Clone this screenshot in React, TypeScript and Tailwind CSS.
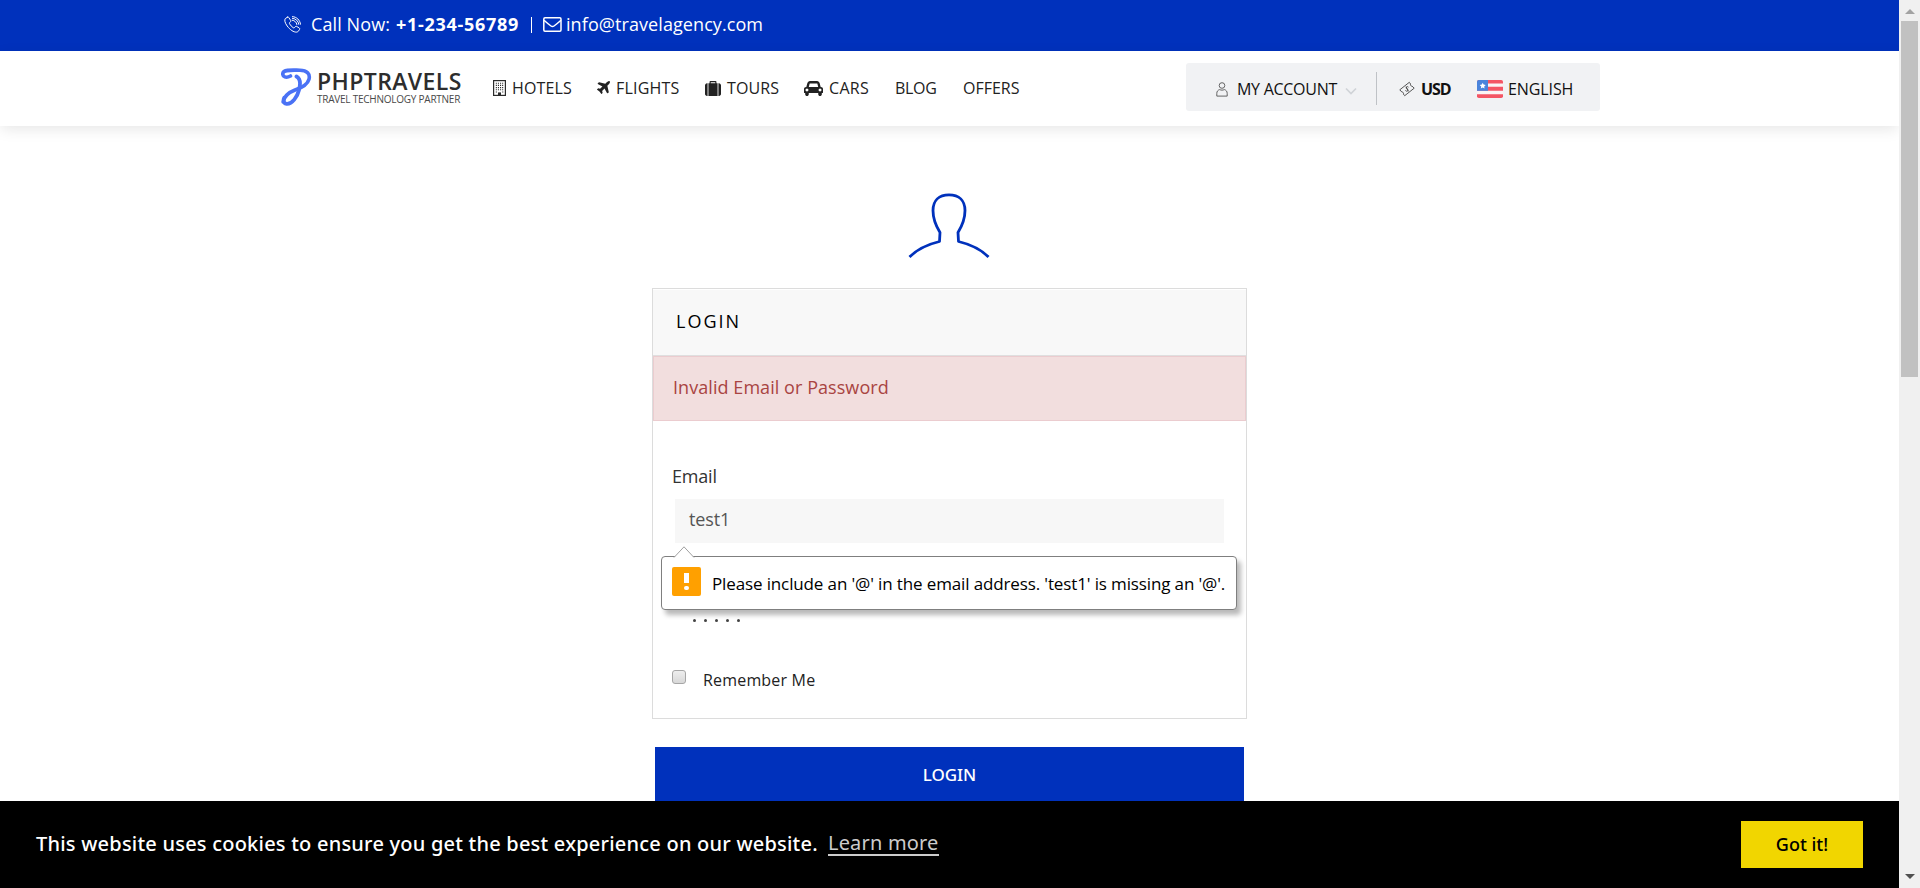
import type { ReactNode } from "react";

function FaGlyph({ d, box, className }: { d: string; box: string; className: string }) {
  return (
    <svg viewBox={box} className={className} fill="currentColor" aria-hidden="true">
      <path d={d} />
    </svg>
  );
}

const PLANE =
  "M1568 160q44 52 12 148t-108 172l-161 161 160 696q5 19-12 33l-128 96q-7 6-19 6-4 0-7-1-15-3-21-16l-279-508-259 259 53 194q5 17-8 31l-96 96q-9 9-23 9h-2q-15-2-24-13l-189-252-252-189q-11-7-13-23-1-13 9-25l96-97q9-9 23-9 6 0 8 1l194 53 259-259-508-279q-14-8-17-24-2-16 9-27l128-128q14-13 30-8l665 159 160-160q76-76 172-108t148 12z";
const SUITCASE =
  "M640 256h512v-128h-512v128zm-352 0v1408h-64q-92 0-158-66t-66-158v-960q0-92 66-158t158-66h64zm1120 0v1408h-1024v-1408h128v-160q0-40 28-68t68-28h576q40 0 68 28t28 68v160h128zm384 224v960q0 92-66 158t-158 66h-64v-1408h64q92 0 158 66t66 158z";
const CAR =
  "M480 1088q0-66-47-113t-113-47-113 47-47 113 47 113 113 47 113-47 47-113zm36-320h1016l-89-357q-2-8-14-17.5t-21-9.5h-768q-9 0-21 9.5t-14 17.5zm1372 320q0-66-47-113t-113-47-113 47-47 113 47 113 113 47 113-47 47-113zm160-96v384q0 14-9 23t-23 9h-96v128q0 80-56 136t-136 56-136-56-56-136v-128h-1024v128q0 80-56 136t-136 56-136-56-56-136v-128h-96q-14 0-23-9t-9-23v-384q0-93 65.5-158.5t158.5-65.5h28l105-419q23-94 104-157.5t179-63.5h768q98 0 179 63.5t104 157.5l105 419h28q93 0 158.5 65.5t65.5 158.5z";

function BuildingIcon() {
  return (
    <svg viewBox="0 0 13 16" className="h-4 w-[13px]" aria-hidden="true">
      <rect x="0.6" y="0.6" width="11.8" height="14.8" fill="none" stroke="#2b2b2b" strokeWidth="1.2" />
      <path d="M2.8 3.2h8M2.8 5.4h8M2.8 7.6h8M2.8 9.8h8M2.8 12h1.2M9.2 12h1.2" stroke="#2b2b2b" strokeWidth="1.1" strokeDasharray="1.1 1" />
      <path d="M5 12.4h3V16H5z" fill="#2b2b2b" />
    </svg>
  );
}

function PhoneIcon() {
  return (
    <svg viewBox="0 0 17 17" className="h-[17px] w-[17px]" fill="none" stroke="currentColor" strokeWidth="1" strokeLinejoin="round" strokeLinecap="round" aria-hidden="true">
      <path d="M3.4 1.2 1.3 2.6C.3 4 .8 6.8 3.2 10c2.8 3.800 6.400 6.300 9.400 6.100.9-.1 1.600-.6 2.100-1.300l.9-1.400c.3-.5.200-.9-.3-1.300l-2.600-1.700c-.5-.3-.9-.2-1.300.2l-.9 1c-.4.4-.8.400-1.300.1C7.700 10.700 6.400 9.300 5.500 7.700c-.2-.5-.2-.8.200-1.200l.8-.8c.4-.4.400-.8.200-1.200L4.800 1.500c-.4-.5-.9-.6-1.400-.3z" />
      <path d="M8.200 4.200c2.400.2 4.300 1.900 4.700 4.300M8.400 2.300c3.400.3 6 2.700 6.400 6M8.500.6c4.300.3 7.500 3.500 8 7.600" />
    </svg>
  );
}

function EnvelopeIcon() {
  return (
    <svg viewBox="0 0 19 15" className="h-[15px] w-[19px]" fill="none" stroke="currentColor" strokeWidth="1.5" strokeLinejoin="round" aria-hidden="true">
      <rect x="0.8" y="0.8" width="17.2" height="13.400" rx="1.200" />
      <path d="M1 3.300C4 6 6 7.600 8 9c1 .7 2 .7 3 0 2-1.400 4-3 7-5.700" />
    </svg>
  );
}

function Logo() {
  return (
    <div className="flex w-[212px] shrink-0 items-center gap-[5px]">
      <svg viewBox="0 0 31 38" className="h-[38px] w-[31px] shrink-0" fill="none" stroke="#4a72f5" strokeLinecap="round" aria-hidden="true">
        <path d="M9.500 8C5 10.500 1.400 8.800 1.800 5.400 2.600 1.200 12 2.200 19 2.200c7 0 10.400 4 9 9-1.500 5.500-7.500 8.600-14 10.800C7.500 24.500 3 29 2.200 34" strokeWidth="3.600" />
        <path d="M15.500 8.500C20 11 19.500 16.500 18 22c-1.500 6.500-7 14.500-12.500 13.800-3-.4-3.600-3.300-2.300-6" strokeWidth="3.800" />
      </svg>
      <div className="flex flex-col pb-px whitespace-nowrap">
        <span className="text-[23px] leading-[24px] font-semibold tracking-[0.4px] text-[#2d2d2d]">PHPTRAVELS</span>
        <span className="text-[10px] leading-[12px] tracking-[-0.24px] text-[#4a4a4a]">TRAVEL TECHNOLOGY PARTNER</span>
      </div>
    </div>
  );
}

function NavItem({ icon, iconBox, width, children }: { icon?: ReactNode; iconBox?: string; width: string; children: ReactNode }) {
  return (
    <a className={`flex shrink-0 items-center whitespace-nowrap ${width}`}>
      {icon && <span className={`shrink-0 ${iconBox}`}>{icon}</span>}
      {children}
    </a>
  );
}

function FlagIcon() {
  return (
    <svg viewBox="0 0 26 18" className="h-[18px] w-[26px]" aria-hidden="true">
      <clipPath id="flag"><rect width="26" height="18" rx="1.800" /></clipPath>
      <g clipPath="url(#flag)">
        <rect width="26" height="18" fill="#fbf3f4" />
        <path d="M0 0h26v3.400H0zM0 6.800h26v4H0zM0 14.200h26V18H0z" fill="#f45564" />
        <rect width="11" height="10.800" fill="#4a84dc" />
        <path d="m5.700 2.700.9 1.900 2.100.3-1.500 1.500.3 2.100-1.800-1-1.900 1 .4-2.100-1.500-1.500 2.100-.3z" fill="#fff" />
      </g>
    </svg>
  );
}

function AccountBar() {
  return (
    <div className="flex h-12 w-[414px] shrink-0 items-center rounded-[3px] bg-[#f1f2f4] pt-[4px] pl-[30px] text-[#111]">
      <svg viewBox="0 0 12 15" className="mr-[9px] h-[15px] w-[12px]" fill="none" stroke="#555" strokeWidth="0.9" aria-hidden="true">
        <circle cx="6" cy="3.500" r="2.800" />
        <path d="M.8 14.100v-2.700C.8 9.300 2 8 3.700 7.600c1.400.7 3.200.7 4.600 0 1.700.4 2.900 1.700 2.900 3.800v2.700z" />
      </svg>
      <span className="w-[108px] shrink-0 tracking-[-0.28px] whitespace-nowrap">MY ACCOUNT</span>
      <svg viewBox="0 0 12 8" className="mt-[3px] h-2 w-3" fill="none" stroke="#d0d3d7" strokeWidth="1.700" aria-hidden="true">
        <path d="m1 1.500 5 5 5-5" />
      </svg>
      <span className="-mt-[2px] ml-[19px] h-[33px] w-px bg-[#bfc2c6]" />
      <svg viewBox="0 0 16 16" className="ml-[22px] h-4 w-4" fill="none" stroke="#444" strokeWidth="0.9" strokeLinejoin="round" aria-hidden="true">
        <path d="M.8 8.800 10.300 1.300l1.300 1.700c-.5 1 .2 2.200 1.400 2.100l2.200 2.100-9.500 7.500-1.300-1.600c.5-1-.3-2.200-1.500-2z" />
        <path d="M9.500 6.200c-.6-.8-1.700-.8-2.100-.1-.7 1 .1 1.600.8 1.900.9.400 1.200 1.200.5 1.900-.8.700-1.900.3-2.300-.5M7.100 5.600l2.200 4.800" />
      </svg>
      <b className="ml-[6px] w-[56px] shrink-0 text-[16px] tracking-[-1.100px]">USD</b>
      <FlagIcon />
      <span className="ml-[5px] tracking-[-0.1px]">ENGLISH</span>
    </div>
  );
}

function ValidationBubble() {
  return (
    <div className="absolute top-[202px] left-[8px] z-10 flex h-[54px] w-[576px] items-center rounded-[4px] border border-[#7f7f7f] bg-white pl-[10px] shadow-[4px_5px_5px_rgba(0,0,0,0.28)]">
      <svg viewBox="0 0 22 12" className="absolute -top-[11px] left-[11px] h-3 w-[22px]" aria-hidden="true">
        <path d="M1 11.500 11 .8l10 10.700V12H1z" fill="#fff" />
        <path d="M1 11.500 11 .8l10 10.700" fill="none" stroke="#a0a0a0" />
      </svg>
      <span className="-mt-1 flex h-[29px] w-[29px] shrink-0 flex-col items-center justify-center gap-[3px] rounded-[2px] bg-[#ffa000]">
        <i className="h-[10px] w-[5px] bg-white" />
        <i className="h-1 w-[5px] rounded-full bg-white" />
      </span>
      <span className="mt-[2px] ml-[11px] text-[17px] tracking-[-0.13px] whitespace-nowrap text-black">
        Please include an '@' in the email address. 'test1' is missing an '@'.
      </span>
    </div>
  );
}

function LoginCard() {
  return (
    <section className="w-[595px] border border-[#dcdcdc] bg-white">
      <h1 className="mt-px flex h-[66px] items-center border-b border-[#dfdfdf] bg-[#f8f8f8] pb-[2px] pl-[23px] text-[18px] tracking-[2px] text-black">LOGIN</h1>
      <div className="flex h-[65px] items-center border border-[#ebcccf] bg-[#f2dede] pb-[3px] pl-[19px] text-[18px] tracking-[0.06px] text-[#a94442]">
        Invalid Email or Password
      </div>
      <div className="relative -mt-[67px] h-[364px] px-[19px] pt-[109px]">
        <label className="block text-[18px] leading-[26px] tracking-[-0.2px] text-[#333]">Email</label>
        <div className="mt-[10px] ml-[3px] flex h-11 w-[549px] items-center bg-[#f7f7f7] pb-[3px] pl-[14px] text-[18px] tracking-[-0.1px] text-[#555]">test1</div>
        <div className="mt-[76px] ml-[21px] flex gap-[8px]">
          {[0, 1, 2, 3, 4].map((n) => (
            <i key={n} className="h-[3px] w-[3px] rounded-full bg-[#444]" />
          ))}
        </div>
        <label className="mt-[46px] flex h-6 items-center text-[16px] tracking-[0.18px] text-[#222]">
          <span className="mr-[17px] -mt-[6px] h-[14px] w-[14px] rounded-[3px] border border-[#a6a6a6] bg-linear-to-b from-[#eee] to-[#d8d8d8]" />
          Remember Me
        </label>
        <ValidationBubble />
      </div>
    </section>
  );
}

export default function App() {
  return (
    <div className="relative flex h-[888px] w-[1920px] overflow-hidden bg-white font-['Open_Sans',sans-serif]">
      <div className="flex w-[1899px] shrink-0 flex-col overflow-hidden">
        <div className="flex h-[51px] shrink-0 items-center bg-[#0031bc] pb-[2px] pl-[284px] text-[18px] whitespace-nowrap text-white">
          <PhoneIcon />
          <span className="ml-[10px] w-[85px] tracking-[0.1px]">Call Now:</span>
          <b className="w-[135px] tracking-[0.7px]">+1-234-56789</b>
          <span className="h-4 w-px bg-white" />
          <span className="ml-[11px] w-[23px]"><EnvelopeIcon /></span>
          <span className="tracking-[0.08px]">info@travelagency.com</span>
        </div>

        <header className="flex h-[75px] shrink-0 items-center pb-[3px] pl-[281px] text-[16px] text-[#222] shadow-[0_4px_14px_-1px_rgba(0,0,0,0.1)]">
          <Logo />
          <nav className="flex w-[693px] shrink-0 items-center pt-px">
            <NavItem width="w-[104px] tracking-[0.15px]" iconBox="w-[19px]" icon={<BuildingIcon />}>HOTELS</NavItem>
            <NavItem width="w-[108px] tracking-[0.2px]" iconBox="w-[19px]" icon={<FaGlyph d={PLANE} box="190 130 1410 1410" className="h-[13px] w-[13px]" />}>FLIGHTS</NavItem>
            <NavItem width="w-[99px] tracking-[0.1px]" iconBox="w-[22px]" icon={<FaGlyph d={SUITCASE} box="0 0 1792 1664" className="mt-px h-[15px] w-4" />}>TOURS</NavItem>
            <NavItem width="w-[91px] tracking-[0.3px]" iconBox="w-[25px]" icon={<FaGlyph d={CAR} box="0 128 2048 1600" className="mt-px h-[15px] w-[19px]" />}>CARS</NavItem>
            <NavItem width="w-[68px] tracking-[-0.3px]">BLOG</NavItem>
            <NavItem width="w-[60px]">OFFERS</NavItem>
          </nav>
          <AccountBar />
        </header>

        <main className="flex flex-col items-center pt-[64px]">
          <svg viewBox="0 0 88 70" className="mr-[2px] h-[70px] w-[88px]" fill="none" stroke="#0031bc" strokeWidth="2.800" strokeLinejoin="round" aria-hidden="true">
            <path d="M4.500 67C11 60.500 22 54.500 34.500 51.500L35 42.500C31 36 28 28.500 28 20.500 28 10.500 34 4.800 44 4.800c10 0 16 5.700 16 15.700 0 8-3 15.500-7 22l.5 9C66 54.500 77 60.500 83.500 67" />
          </svg>
          <div className="mt-[28px]"><LoginCard /></div>
          <button className="mt-[28px] h-[54px] w-[589px] bg-[#0031bc] pt-px font-['Noto_Sans',sans-serif] text-[17px] font-medium text-white">LOGIN</button>
        </main>
      </div>

      <aside className="flex w-[21px] shrink-0 flex-col items-center bg-[#f0f0f0]">
        <svg viewBox="0 0 10 5" className="mt-[9px] h-[5px] w-[10px]" aria-hidden="true"><path d="M5 0l5 5H0z" fill="#a3a3a3" /></svg>
        <span className="mt-[7px] h-[356px] w-[17px] bg-[#c1c1c1]" />
        <svg viewBox="0 0 10 5" className="mt-auto mb-[9px] h-[5px] w-[10px]" aria-hidden="true"><path d="M0 0h10L5 5z" fill="#505050" /></svg>
      </aside>

      <div className="absolute bottom-0 left-0 z-20 flex h-[87px] w-[1899px] items-center bg-black pr-9 pb-[2px] pl-9 font-['Noto_Sans',sans-serif] text-[20px] whitespace-nowrap text-white">
        <span className="w-[792px] font-medium tracking-[0.22px]">This website uses cookies to ensure you get the best experience on our website.</span>
        <a className="mt-px border-b-2 border-[#ccc] leading-[22px] tracking-[0.18px] text-[#ccc]">Learn more</a>
        <button className="mt-[2px] ml-auto h-[47px] w-[122px] bg-[#f1d600] pb-px text-[18px] font-medium text-black">Got it!</button>
      </div>
    </div>
  );
}
